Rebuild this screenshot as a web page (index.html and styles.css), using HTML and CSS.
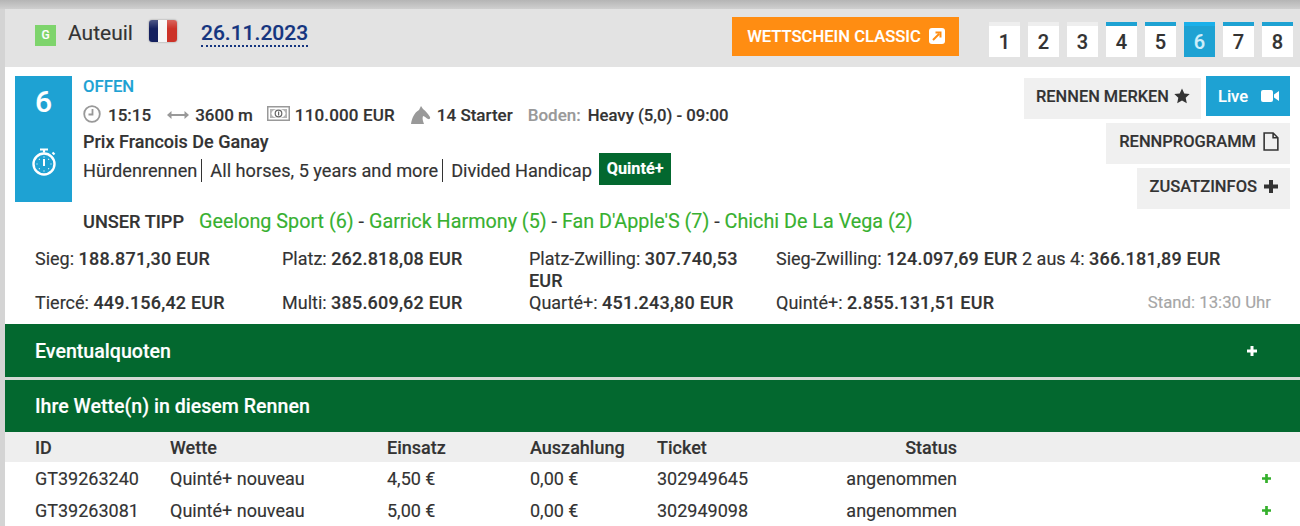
FILE: index.html
```html
<!DOCTYPE html>
<html lang="de">
<head>
<meta charset="utf-8">
<title>Auteuil</title>
<link rel="stylesheet" href="styles.css">
</head>
<body>
<div class="page">
  <header class="top">
    <div class="venue">
      <span class="going">G</span>
      <span class="track">Auteuil</span>
      <span class="flag"></span>
      <span class="date">26.11.2023</span>
    </div>
    <a class="classic">WETTSCHEIN CLASSIC
      <svg class="ext" viewBox="0 0 16 16"><rect width="16" height="16" rx="3" fill="#fff"/><path d="M4 12 10 6M6.500 4.500H11.500V9.500" fill="none" stroke="#ff8d12" stroke-width="2"/></svg>
    </a>
    <nav class="tabs">
      <a class="tab">1</a><a class="tab">2</a><a class="tab">3</a>
      <a class="tab due">4</a><a class="tab due">5</a><a class="tab current">6</a>
      <a class="tab due">7</a><a class="tab due">8</a>
    </nav>
  </header>

  <main class="sheet">
    <section class="race">
      <div class="num">
        <span class="num-big">6</span>
        <svg class="watch" viewBox="0 0 24 28"><g fill="none" stroke="#fff"><circle cx="12" cy="16" r="10.500" stroke-width="2.400"/><path d="M8 1.500h8M12 1.500v3M20.500 4.500l2 2" stroke-width="2.200"/><path d="M12 11v7" stroke-width="2"/><path d="M12 8.500v1M12 22.500v1M4.500 16h1M18.500 16h1M7 11l.7.7M17 11l-.7.7M7 21l.7-.7M17 21l-.7-.7" stroke-width="1.200"/></g></svg>
      </div>
      <div class="info">
        <div class="status">OFFEN</div>
        <div class="facts">
          <svg class="i-clock" viewBox="0 0 18 18"><circle cx="9" cy="9" r="7.800" fill="none" stroke="#999" stroke-width="1.800"/><path d="M9.500 4v5.500H5.500" fill="none" stroke="#999" stroke-width="1.800"/></svg>
          <b class="f-time">15:15</b>
          <svg class="i-arrow" viewBox="0 0 22 10"><path d="M0 5 4.500 1v3h13V1L22 5l-4.500 4V6h-13v3z" fill="#999"/></svg>
          <b class="f-dist">3600 m</b>
          <svg class="i-money" viewBox="0 0 23 15"><rect x=".75" y=".75" width="21.500" height="13.500" fill="#fff" stroke="#999" stroke-width="1.500"/><rect x="3" y="3" width="17" height="9" fill="#b5b5b5"/><ellipse cx="11.500" cy="7.500" rx="7" ry="4.500" fill="#fff"/><circle cx="11.500" cy="7.500" r="3.300" fill="none" stroke="#666" stroke-width="1.200"/><path d="M11 5.500h1.200v4H11z" fill="#666"/></svg>
          <b class="f-purse">110.000 EUR</b>
          <svg class="i-horse" viewBox="0 0 20 18"><path fill="#999" d="M0 18C1 12 3 7 8 4l2-4 2 3c3 2 5 5 7 8 .6 1.500-.5 2.500-2 2-2-1-3-2.500-5-3-1 3 0 5 1 8z"/></svg>
          <b class="f-start">14 Starter</b>
          <span class="label">Boden:</span>
          <b class="f-ground">Heavy (5,0) - 09:00</b>
        </div>
        <div class="title">Prix Francois De Ganay</div>
        <div class="cats">
          <span class="cat">Hürdenrennen</span>
          <span class="cat">All horses, 5 years and more</span>
          <span class="cat last">Divided Handicap</span>
          <span class="quinte">Quinté+</span>
        </div>
        <div class="tip">
          <b class="tip-head">UNSER TIPP</b>
          <span class="tip-list"><em>Geelong Sport (6)</em> - <em>Garrick Harmony (5)</em> - <em>Fan D'Apple'S (7)</em> - <em>Chichi De La Vega (2)</em></span>
        </div>
      </div>
      <div class="actions">
        <div class="act-row">
          <a class="act">RENNEN MERKEN
            <svg class="a-ico" viewBox="0 0 16 16"><path fill="#333" d="M8 .5l2.300 5 5.400.6-4 3.700 1.100 5.400L8 12.500l-4.800 2.700 1.100-5.400-4-3.700 5.400-.6z"/></svg>
          </a>
          <a class="live">Live
            <svg class="cam" viewBox="0 0 18 12"><path fill="#fff" d="M0 2a2 2 0 0 1 2-2h8a2 2 0 0 1 2 2v8a2 2 0 0 1-2 2H2a2 2 0 0 1-2-2zM13 4.500 18 1v10L13 7.500z"/></svg>
          </a>
        </div>
        <a class="act prog">RENNPROGRAMM
          <svg class="a-doc" viewBox="0 0 15 18"><path fill="none" stroke="#333" stroke-width="1.500" d="M1 1h8.500L14 5.500V17H1zM9.500 1v4.500H14"/></svg>
        </a>
        <a class="act more">ZUSATZINFOS
          <svg class="a-plus" viewBox="0 0 14 13"><path fill="#333" d="M5 0h4v4.500h5v4H9V13H5V8.500H0v-4h5z"/></svg>
        </a>
      </div>
    </section>

    <section class="pools">
      <div class="pool">Sieg: <b>188.871,30 EUR</b></div>
      <div class="pool">Platz: <b>262.818,08 EUR</b></div>
      <div class="pool">Platz-Zwilling: <b>307.740,53 EUR</b></div>
      <div class="pool wide">Sieg-Zwilling: <b>124.097,69 EUR</b> 2 aus 4: <b>366.181,89 EUR</b></div>
      <div class="pool">Tiercé: <b>449.156,42 EUR</b></div>
      <div class="pool">Multi: <b>385.609,62 EUR</b></div>
      <div class="pool">Quarté+: <b>451.243,80 EUR</b></div>
      <div class="pool">Quinté+: <b>2.855.131,51 EUR</b></div>
      <div class="stand">Stand: 13:30 Uhr</div>
    </section>

    <div class="bar first"><span>Eventualquoten</span><svg class="bar-plus" viewBox="0 0 10 10"><path fill="#fff" d="M3.500 0h3v3.500H10v3H6.500V10h-3V6.500H0v-3h3.500z"/></svg></div>
    <div class="bar second"><span>Ihre Wette(n) in diesem Rennen</span></div>

    <div class="bets">
      <div class="row head">
        <span>ID</span><span>Wette</span><span>Einsatz</span><span>Auszahlung</span><span>Ticket</span><span class="st">Status</span><span></span>
      </div>
      <div class="row">
        <span>GT39263240</span><span>Quinté+ nouveau</span><span>4,50 €</span><span>0,00 €</span><span>302949645</span><span class="st">angenommen</span>
        <svg class="row-plus" viewBox="0 0 10 10"><path fill="#35b02c" d="M3.500 0h3v3.500H10v3H6.500V10h-3V6.500H0v-3h3.500z"/></svg>
      </div>
      <div class="row">
        <span>GT39263081</span><span>Quinté+ nouveau</span><span>5,00 €</span><span>0,00 €</span><span>302949098</span><span class="st">angenommen</span>
        <svg class="row-plus" viewBox="0 0 10 10"><path fill="#35b02c" d="M3.500 0h3v3.500H10v3H6.500V10h-3V6.500H0v-3h3.500z"/></svg>
      </div>
    </div>
  </main>
</div>
</body>
</html>
```
FILE: styles.css
```css
* { box-sizing: border-box; }
html, body { margin: 0; height: 526px; overflow: hidden; }
body {
  font-family: Roboto, "Liberation Sans", sans-serif;
  font-size: 18px;
  color: #333;
  background: #d4d4d4;
  -webkit-text-stroke: .15px;
}
b { font-weight: 500; }
svg { display: block; flex: none; }
.page {
  padding-top: 9px;
  padding-left: 5px;
  background: linear-gradient(#b5b5b5, #cfcfcf 9px, transparent 9px);
}

/* top */
.top {
  height: 58px;
  background: #e3e3e3;
  display: flex;
  align-items: flex-start;
  padding-left: 30px;
}
.venue { display: flex; align-items: center; width: 697px; height: 48px; }
.going {
  width: 21px; height: 21px; background: #7ed46c; color: #fff;
  font-size: 12px; font-weight: 500; text-align: center; line-height: 21px;
  margin-top: 4px;
}
.track { font-size: 21px; margin-left: 12px; }
.flag {
  width: 28px; height: 22px; margin-left: 16px; margin-top: -4px; border-radius: 3px;
  background:
    linear-gradient(rgba(255,255,255,.25), rgba(255,255,255,0) 40%),
    linear-gradient(90deg, #14205f 0 33%, #f6f6f6 33% 66%, #cc3228 66%);
  box-shadow: 0 0 2px #888;
  filter: blur(.4px);
}
.date {
  font-size: 21px; font-weight: 500; color: #15357f; margin-left: 24px;
  border-bottom: 2px dotted #15357f; line-height: 24px; margin-top: 1px;
}
.classic {
  width: 227px; height: 39px; margin-top: 8px; padding: 0 0 1px 1px;
  background: #ff8d12; color: #fff; font-weight: 500; font-size: 16.600px;
  display: flex; align-items: center; justify-content: center; gap: 8px;
}
.ext { width: 16px; height: 16px; }
.tabs { display: flex; gap: 8px; margin-left: 30px; margin-top: 13px; }
.tab {
  width: 31px; height: 35px; background: #fff; border-top: 4px solid #eee;
  text-align: center; font-size: 20px; font-weight: 500; line-height: 33px;
}
.tab.due { border-top-color: #1ea2d3; }
.tab.current { background: #1ea2d3; border-top-color: #1ab0ea; color: #cfeefa; }

/* sheet */
.sheet { background: #fff; height: 459px; }
.race { display: flex; position: relative; padding: 9px 10px 0 10px; height: 181px; }
.num {
  width: 57px; height: 126px; background: #1ea2d3; color: #fff; flex: none;
  display: flex; flex-direction: column; align-items: center;
}
.num-big { font-size: 30px; font-weight: 500; line-height: 30px; margin-top: 11px; }
.watch { width: 24px; height: 28px; margin-top: 31px; }
.info { margin-left: 11px; flex: 1; }
.status { color: #1ea2d3; font-weight: 500; font-size: 16.700px; line-height: 20px; margin-top: 1px; }
.facts { display: flex; align-items: center; height: 24px; margin-top: 6px; font-size: 17px; }
.i-clock { width: 18px; height: 18px; margin-top: -2px; }
.f-time { margin-left: 7px; }
.i-arrow { width: 22px; height: 10px; margin-left: 16px; }
.f-dist { margin-left: 6px; }
.i-money { width: 23px; height: 15px; margin-left: 14px; margin-top: -3px; }
.f-purse { margin-left: 5px; letter-spacing: .15px; }
.i-horse { width: 20px; height: 18px; margin-left: 16px; }
.f-start { margin-left: 6px; }
.label { color: #999; font-weight: 500; margin-left: 15px; margin-right: 7px; }
.f-ground { font-size: 16.700px; }
.title { font-weight: 500; font-size: 18px; line-height: 24px; margin-top: 3px; }
.cats { display: flex; align-items: center; height: 32px; margin-top: -1px; font-size: 18.200px; }
.cat { line-height: 23px; padding-right: 4px; margin: 2px 8px 0 0; border-right: 1px solid #333; }
.cat.last { border: 0; margin-right: 0; padding-right: 7px; letter-spacing: -.05px; }
.quinte { background: #03682f; color: #fff; font-weight: 700; font-size: 16.200px; padding: 0 8px; line-height: 32px; height: 32px; }
.tip { display: flex; align-items: baseline; margin-top: 25px; }
.tip-head { font-size: 18.200px; width: 116px; }
.tip-list { font-size: 19.750px; }
.tip-list em { font-style: normal; color: #37b030; }

.actions {
  position: absolute; right: 10px; top: 9px;
  display: flex; flex-direction: column; align-items: flex-end; gap: 4px;
}
.act-row { display: flex; align-items: flex-start; gap: 5px; height: 43px; }
.act {
  height: 41px; background: #f0f0f0; display: flex; align-items: center; gap: 5px;
  padding: 0 11px 5px 12px; font-weight: 500; font-size: 16.500px; color: #333;
}
.act-row .act { margin-top: 2px; font-size: 16.400px; }
.prog { gap: 7px; padding-left: 13px; }
.more { gap: 7px; padding-left: 13px; padding-right: 12px; }
.live {
  width: 84px; height: 40px; background: #1ea2d3; color: #fff; font-weight: 500; font-size: 16.500px;
  display: flex; align-items: center; padding-left: 12px; gap: 13px;
}
.cam { width: 18px; height: 12px; }
.a-ico { width: 16px; height: 16px; }
.a-doc { width: 16px; height: 19px; }
.a-plus { width: 14px; height: 13px; }

/* pools */
.pools {
  display: grid; grid-template-columns: repeat(4, 247px) 1fr; align-content: start;
  padding: 0 29px 0 30px; height: 76px; line-height: 22px; font-size: 18px;
}
.pool b { letter-spacing: .2px; }
.pool.wide { grid-column: 4 / 6; }
.stand { color: #a6a6a6; text-align: right; font-size: 16.800px; white-space: nowrap; margin: -1px 0 0 -60px; }

/* bars */
.bar {
  background: #03682f; color: #fff; font-weight: 500; font-size: 19.600px;
  display: flex; align-items: center; justify-content: space-between;
  padding-left: 30px;
}
.bar.first { height: 53px; margin-bottom: 3px; padding: 1px 43px 0 30px; box-shadow: 0 3px 0 #d4d8d4; }
.bar.second { height: 52px; }
.bar-plus { width: 10px; height: 10px; }

/* bets */
.row {
  display: grid;
  grid-template-columns: 135px 217px 143px 127px 120px 180px 1fr;
  align-items: center; height: 32px; padding-left: 30px; font-size: 18px;
}
.row.head { height: 30px; background: #eee; font-weight: 500; }
.st { text-align: right; }
.row-plus { width: 9px; height: 9px; justify-self: end; margin-right: 29px; }
```
